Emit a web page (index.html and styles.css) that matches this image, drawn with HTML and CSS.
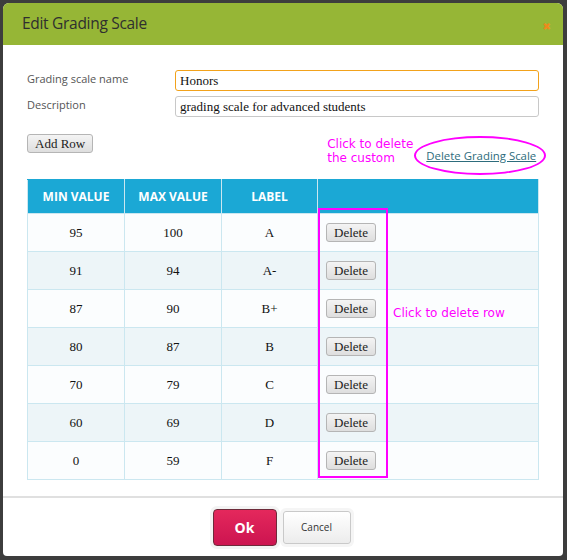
FILE: index.html
```html
<html lang="en">
<head>
    <meta charset="UTF-8">
    <title>Edit Grading Scale</title>
    <link rel="stylesheet" href="styles.css">
</head>
<body>
    <div class="modal">
        <div class="modal-head">
            <h2 class="modal-title">Edit Grading Scale</h2>
            <span class="close">&#10006;</span>
        </div>
        <div class="modal-body">
            <div class="field">
                <span class="label">Grading scale name</span>
                <input class="textbox active" type="text" value="Honors">
            </div>
            <div class="field">
                <span class="label">Description</span>
                <input class="textbox" type="text" value="grading scale for advanced students">
            </div>
            <div class="toolbar">
                <button class="btn">Add Row</button>
                <div class="note note-scale">Click to delete<br>the custom</div>
                <span class="ring"><a href="#" class="link">Delete Grading Scale</a></span>
            </div>
            <div class="tablewrap">
                <table class="scale">
                    <thead>
                        <tr><th class="c1">MIN VALUE</th><th class="c2">MAX VALUE</th><th class="c3">LABEL</th><th></th></tr>
                    </thead>
                    <tbody id="rows"></tbody>
                </table>
                <div class="box"></div>
                <div class="note note-row">Click to delete row</div>
            </div>
        </div>
        <div class="modal-foot">
            <button class="ok">Ok</button>
            <button class="cancel">Cancel</button>
        </div>
    </div>
    <script>
        var rows = [
            [95, 100, "A"],
            [91, 94, "A-"],
            [87, 90, "B+"],
            [80, 87, "B"],
            [70, 79, "C"],
            [60, 69, "D"],
            [0, 59, "F"]
        ]
        var html = rows.map(function(r){
            return "<tr><td>"+r[0]+"</td><td>"+r[1]+"</td><td>"+r[2]+"</td><td class='act'><button class='btn'>Delete</button></td></tr>"
        })
        document.getElementById("rows").innerHTML = html.join("")
    </script>
</body>
</html>
```

FILE: styles.css
```css
body {
    margin: 0;
    background-color: #3d3d3d;
    height: 560px;
    overflow: hidden;
}
.modal {
    margin: 3px 0 0 3px;
    width: 560px;
    height: 553px;
    background-color: white;
    border-radius: 6px 6px 4px 4px;
    display: flex;
    flex-direction: column;
    overflow: hidden;
}
.modal-head {
    height: 42px;
    flex-shrink: 0;
    background-color: #96b636;
    display: flex;
    align-items: center;
    justify-content: space-between;
    padding: 0 12px 0 19px;
}
.modal-title {
    margin: 0;
    font-family: "Open Sans", sans-serif;
    font-weight: normal;
    font-size: 15.5px;
    color: #2f2f2f;
    letter-spacing: -0.3px;
    margin-top: -2px;
}
.close {
    color: #ee8a1c;
    font-size: 10px;
    font-weight: bold;
    font-family: "DejaVu Sans", sans-serif;
    margin-top: 5px;
}
.modal-body {
    padding: 25px 24px 0 24px;
    flex: 1;
}
.field {
    display: flex;
    align-items: flex-start;
    margin-bottom: 5px;
}
.label {
    width: 148px;
    font-family: "Open Sans", sans-serif;
    font-size: 11px;
    color: #555;
    padding-top: 1px;
}
.textbox {
    width: 364px;
    height: 21px;
    box-sizing: border-box;
    border: 1px solid #c8c8c8;
    border-radius: 3px;
    font-family: "Liberation Serif", serif;
    font-size: 13px;
    padding: 0 4px;
    color: #111;
    outline: none;
}
.textbox.active {
    border-color: #f2a21b;
}
.toolbar {
    display: flex;
    align-items: flex-start;
    margin-top: 17px;
    height: 45px;
}
.btn {
    font-family: "Liberation Serif", serif;
    font-size: 13px;
    color: #222;
    height: 19px;
    padding: 0 7px;
    border: 1px solid #b5b5b5;
    border-radius: 3px;
    background: linear-gradient(#f4f4f4, #dedede);
    line-height: 16px;
    white-space: nowrap;
    flex-shrink: 0;
}
.note {
    color: #ff00ff;
    font-family: "DejaVu Sans", sans-serif;
    font-size: 12px;
    line-height: 14px;
    white-space: nowrap;
}
.note-scale {
    margin-left: 234px;
    margin-top: 3px;
}
.ring {
    flex-shrink: 0;
    margin-left: 1px;
    margin-top: 2px;
    width: 128px;
    height: 35px;
    border: 2px solid #ff00ff;
    border-radius: 50%;
    display: flex;
    align-items: center;
    justify-content: center;
}
.link {
    font-family: "Open Sans", sans-serif;
    font-size: 11.4px;
    color: #2d6c7c;
    margin-left: 2px;
    white-space: nowrap;
}
.tablewrap {
    position: relative;
}
.scale {
    border-collapse: collapse;
    table-layout: fixed;
    width: 512px;
}
.scale th {
    background-color: #1ba8d5;
    color: white;
    font-family: "Open Sans", sans-serif;
    font-weight: bold;
    font-size: 12px;
    height: 34px;
    padding: 0;
    border: 1px solid #cbe7f0;
    border-top-color: #1ba8d5;
}
.c1 { width: 96px; }
.c2 { width: 96px; }
.c3 { width: 95px; }
.scale td {
    height: 38px;
    padding: 0;
    text-align: center;
    border: 1px solid #cbe7f0;
    font-family: "Liberation Serif", serif;
    font-size: 13px;
    color: #111;
    background-color: #fbfdfe;
}
.scale tr:nth-child(even) td {
    background-color: #edf5f8;
}
.scale td.act {
    text-align: left;
    padding-left: 8px;
}
.box {
    position: absolute;
    left: 291px;
    top: 29px;
    width: 66px;
    height: 266px;
    border: 2px solid #ff00ff;
}
.note-row {
    position: absolute;
    left: 366px;
    top: 127px;
}
.modal-foot {
    flex-shrink: 0;
    border-top: 2px solid #e0e0e0;
    height: 58px;
    display: flex;
    justify-content: center;
    align-items: center;
    padding-right: 3px;
}
.ok {
    width: 64px;
    height: 37px;
    border: 1px solid #6d2a3a;
    border-radius: 4px;
    background: linear-gradient(#e4285c, #cc1450);
    color: white;
    font-family: "Open Sans", sans-serif;
    font-weight: bold;
    font-size: 14px;
    box-shadow: 0 0 0 3px #f3f3f3;
}
.cancel {
    margin-left: 6px;
    width: 68px;
    height: 33px;
    border: 1px solid #c9c9c9;
    border-radius: 3px;
    background: linear-gradient(#ffffff, #ececec);
    color: #333;
    font-family: "Open Sans", sans-serif;
    font-size: 10px;
    box-shadow: 0 0 0 3px #f5f5f5;
}
```
